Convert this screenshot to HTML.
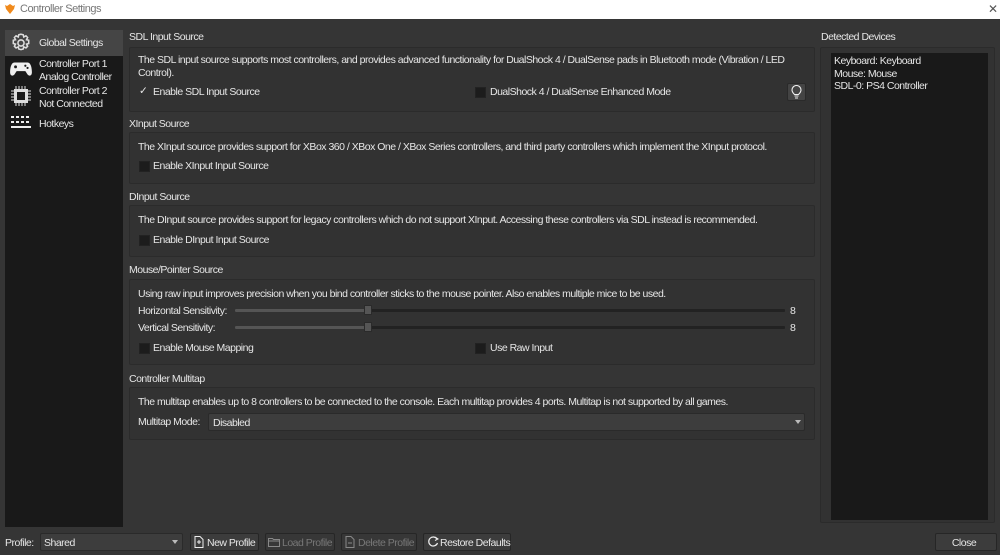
<!DOCTYPE html>
<html><head><style>
*{margin:0;padding:0;box-sizing:border-box}
body{width:1000px;height:555px;background:#353535;font-family:"Liberation Sans",sans-serif;font-size:10.5px;color:#e6e6e6;position:relative;overflow:hidden;letter-spacing:-0.5px}
.a{position:absolute;white-space:nowrap}
.box{position:absolute;border:1px solid #2b2b2b;border-radius:2px;background:#323232}
.cb{position:absolute;width:11px;height:11px;background:#1c1c1c;border:1px solid #222}
.btn{position:absolute;height:18px;border:1px solid #262626;background:#3c3c3c;border-radius:2px;padding:3px 4px 0 16px;white-space:nowrap}
.dis{color:#777}
.sl{position:absolute;height:3px;background:#222;border-radius:1px}
.h{position:absolute;width:8px;height:10px;background:#555;border:1px solid #2a2a2a;border-radius:1px}
.arr{position:absolute;width:0;height:0;border-left:3px solid transparent;border-right:3px solid transparent;border-top:4px solid #bbb}
</style></head><body>
<div class="a" style="left:0;top:0;width:1000px;height:19px;background:#fff"></div>
<svg class="a" style="left:4px;top:3px" width="12" height="12" viewBox="0 0 12 12"><path d="M6 1 L9 3 L11 2 L10 6 L6 11 L2 6 L1 2 L3 3Z" fill="#f08a1c"/></svg>
<div class="a" style="left:20px;top:3px;color:#777;font-size:11px">Controller Settings</div>
<div class="a" style="left:988px;top:2px;color:#555;font-size:12px">✕</div>

<div class="a" style="left:5px;top:30px;width:118px;height:497px;background:#191919"></div>
<div class="a" style="left:5px;top:30px;width:118px;height:26px;background:#454545"></div>
<svg class="a" style="left:10px;top:32px" width="22" height="22" viewBox="0 0 20 20"><path d="M10 2l2 .5.5 2 2-1 1.5 1.5-1 2 2 .5v3l-2 .5 1 2-1.5 1.5-2-1-.5 2-2 .5-2-.5-.5-2-2 1-1.5-1.5 1-2-2-.5v-3l2-.5-1-2 1.5-1.5 2 1 .5-2z" fill="none" stroke="#ddd" stroke-width="1.4"/><circle cx="10" cy="10" r="2.8" fill="none" stroke="#ddd" stroke-width="1.4"/></svg>
<div class="a" style="left:39px;top:37px">Global Settings</div>
<svg class="a" style="left:9px;top:60px" width="24" height="18" viewBox="0 0 22 16"><path d="M5 2h12c3 0 4 5 4 9 0 3-2 4-4 2l-2-3H7l-2 3c-2 2-4 1-4-2 0-4 1-9 4-9z" fill="#eee"/><circle cx="6" cy="6" r="1.3" fill="#191919"/><circle cx="15" cy="5" r="1" fill="#191919"/><circle cx="17" cy="7" r="1" fill="#191919"/></svg>
<div class="a" style="left:39px;top:58px;line-height:13px">Controller Port 1<br>Analog Controller</div>
<svg class="a" style="left:10px;top:85px" width="22" height="22" viewBox="0 0 22 22"><rect x="4" y="4" width="14" height="14" fill="#ddd"/><rect x="7" y="7" width="8" height="8" fill="#191919"/><path d="M6 1v3M9 1v3M12 1v3M15 1v3M6 18v3M9 18v3M12 18v3M15 18v3M1 6h3M1 9h3M1 12h3M1 15h3M18 6h3M18 9h3M18 12h3M18 15h3" stroke="#ddd"/></svg>
<div class="a" style="left:39px;top:85px;line-height:13px">Controller Port 2<br>Not Connected</div>
<svg class="a" style="left:11px;top:116px" width="20" height="13" viewBox="0 0 20 13"><path d="M0 1h3M5 1h3M10 1h3M15 1h3M0 6h3M5 6h3M10 6h3M15 6h3M0 11h20" stroke="#eee" stroke-width="2"/></svg>
<div class="a" style="left:39px;top:118px">Hotkeys</div>

<div class="a" style="left:129px;top:31px">SDL Input Source</div>
<div class="box" style="left:129px;top:47px;width:686px;height:65px"></div>
<div class="a" style="left:138px;top:54px;line-height:13px">The SDL input source supports most controllers, and provides advanced functionality for DualShock 4 / DualSense pads in Bluetooth mode (Vibration / LED<br>Control).</div>
<div class="a" style="left:139px;top:85px">✓</div>
<div class="a" style="left:153px;top:86px">Enable SDL Input Source</div>
<div class="cb" style="left:475px;top:87px"></div>
<div class="a" style="left:490px;top:86px">DualShock 4 / DualSense Enhanced Mode</div>
<div class="a" style="left:787px;top:83px;width:19px;height:18px;background:#444;border:1px solid #2a2a2a;border-radius:2px"></div>
<svg class="a" style="left:791px;top:85px" width="11" height="14" viewBox="0 0 11 14"><path d="M3.5 9.5C2 8 1 7 1 5a4.5 4.5 0 0 1 9 0c0 2-1 3-2.5 4.5zM3.5 11h4M4 13h3" fill="none" stroke="#eee" stroke-width="1.1"/></svg>

<div class="a" style="left:129px;top:118px">XInput Source</div>
<div class="box" style="left:129px;top:132px;width:686px;height:52px"></div>
<div class="a" style="left:138px;top:141px">The XInput source provides support for XBox 360 / XBox One / XBox Series controllers, and third party controllers which implement the XInput protocol.</div>
<div class="cb" style="left:139px;top:161px"></div>
<div class="a" style="left:153px;top:160px">Enable XInput Input Source</div>

<div class="a" style="left:129px;top:191px">DInput Source</div>
<div class="box" style="left:129px;top:205px;width:686px;height:52px"></div>
<div class="a" style="left:138px;top:214px">The DInput source provides support for legacy controllers which do not support XInput. Accessing these controllers via SDL instead is recommended.</div>
<div class="cb" style="left:139px;top:235px"></div>
<div class="a" style="left:153px;top:234px">Enable DInput Input Source</div>

<div class="a" style="left:129px;top:264px">Mouse/Pointer Source</div>
<div class="box" style="left:129px;top:279px;width:686px;height:86px"></div>
<div class="a" style="left:138px;top:288px">Using raw input improves precision when you bind controller sticks to the mouse pointer. Also enables multiple mice to be used.</div>
<div class="a" style="left:138px;top:305px">Horizontal Sensitivity:</div>
<div class="sl" style="left:235px;top:309px;width:550px"></div><div class="sl" style="left:235px;top:309px;width:132px;background:#555"></div><div class="h" style="left:364px;top:305px"></div>
<div class="a" style="left:790px;top:305px">8</div>
<div class="a" style="left:138px;top:322px">Vertical Sensitivity:</div>
<div class="sl" style="left:235px;top:326px;width:550px"></div><div class="sl" style="left:235px;top:326px;width:132px;background:#555"></div><div class="h" style="left:364px;top:322px"></div>
<div class="a" style="left:790px;top:322px">8</div>
<div class="cb" style="left:139px;top:343px"></div>
<div class="a" style="left:153px;top:342px">Enable Mouse Mapping</div>
<div class="cb" style="left:475px;top:343px"></div>
<div class="a" style="left:490px;top:342px">Use Raw Input</div>

<div class="a" style="left:129px;top:373px">Controller Multitap</div>
<div class="box" style="left:129px;top:387px;width:686px;height:53px"></div>
<div class="a" style="left:138px;top:396px">The multitap enables up to 8 controllers to be connected to the console. Each multitap provides 4 ports. Multitap is not supported by all games.</div>
<div class="a" style="left:138px;top:416px">Multitap Mode:</div>
<div class="a" style="left:208px;top:413px;width:597px;height:18px;background:#3d3d3d;border:1px solid #2a2a2a;border-radius:2px;padding:3px 4px">Disabled</div>
<div class="arr" style="left:795px;top:420px"></div>

<div class="a" style="left:821px;top:31px">Detected Devices</div>
<div class="box" style="left:820px;top:47px;width:175px;height:476px"></div>
<div class="a" style="left:831px;top:53px;width:157px;height:467px;background:#191919"></div>
<div class="a" style="left:834px;top:55px;line-height:12.5px">Keyboard: Keyboard<br>Mouse: Mouse<br>SDL-0: PS4 Controller</div>

<div class="a" style="left:5px;top:537px">Profile:</div>
<div class="a" style="left:40px;top:533px;width:143px;height:18px;background:#3d3d3d;border:1px solid #2a2a2a;border-radius:2px;padding:3px 3px">Shared</div>
<div class="arr" style="left:172px;top:540px"></div>
<div class="btn" style="left:190px;top:533px;width:69px">New Profile</div>
<svg class="a" style="left:194px;top:536px" width="10" height="12"><path d="M1 .5h5l3 3v8H1z M5 4v4M3 6h4" fill="none" stroke="#eee"/></svg>
<div class="btn dis" style="left:265px;top:533px;width:70px;background:#373737">Load Profile</div>
<svg class="a" style="left:268px;top:537px" width="12" height="10"><path d="M.5 1.5h4l1 1h6v7H.5zM.5 4h11" fill="none" stroke="#888"/></svg>
<div class="btn dis" style="left:341px;top:533px;width:76px;background:#373737">Delete Profile</div>
<svg class="a" style="left:345px;top:536px" width="10" height="12"><path d="M1 .5h5l3 3v8H1zM3 7h4" fill="none" stroke="#888"/></svg>
<div class="btn" style="left:423px;top:533px;width:88px">Restore Defaults</div>
<svg class="a" style="left:427px;top:536px" width="12" height="12"><path d="M10 3A4.5 4.5 0 1 0 10.5 7" fill="none" stroke="#eee" stroke-width="1.2"/><path d="M8 1l3 2-3 1.5" fill="none" stroke="#eee"/></svg>
<div class="btn" style="left:935px;top:533px;width:62px;padding-left:0;text-align:center">Close</div>
</body></html>
